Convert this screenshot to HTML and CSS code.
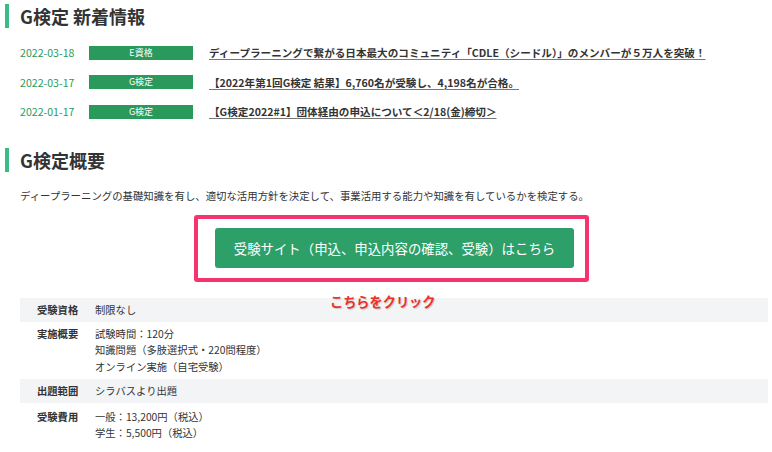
FILE: index.html
```html
<!DOCTYPE html>
<html lang="ja">
<head>
<meta charset="utf-8">
<link rel="stylesheet" href="styles.css">
</head>
<body>
<section class="news">
  <h2 class="heading">G検定 新着情報</h2>
  <ul class="news-list">
    <li class="news-item"><span class="date">2022-03-18</span><span class="badge">E資格</span><a class="link" href="#">ディープラーニングで繋がる日本最大のコミュニティ「CDLE（シードル）」のメンバーが５万人を突破！</a></li>
    <li class="news-item"><span class="date">2022-03-17</span><span class="badge">G検定</span><a class="link" href="#">【2022年第1回G検定 結果】6,760名が受験し、4,198名が合格。</a></li>
    <li class="news-item"><span class="date">2022-01-17</span><span class="badge">G検定</span><a class="link" href="#">【G検定2022#1】団体経由の申込について＜2/18(金)締切＞</a></li>
  </ul>
</section>
<section class="overview">
  <h2 class="heading">G検定概要</h2>
  <p class="desc">ディープラーニングの基礎知識を有し、適切な活用方針を決定して、事業活用する能力や知識を有しているかを検定する。</p>
  <div class="cta-wrap">
    <div class="cta-frame"><a class="cta" href="#">受験サイト（申込、申込内容の確認、受験）はこちら</a></div>
  </div>
  <div class="table">
    <div class="row shaded"><div class="th">受験資格</div><div class="td">制限なし</div></div>
    <div class="row"><div class="th">実施概要</div><div class="td">試験時間：120分<br>知識問題（多肢選択式・220問程度）<br>オンライン実施（自宅受験）</div></div>
    <div class="row shaded"><div class="th">出題範囲</div><div class="td">シラバスより出題</div></div>
    <div class="row"><div class="th">受験費用</div><div class="td">一般：13,200円（税込）<br>学生：5,500円（税込）</div></div>
    <div class="click-note">こちらをクリック</div>
  </div>
</section>
</body>
</html>
```

FILE: styles.css
```css
* { box-sizing: border-box; }
html, body { margin: 0; padding: 0; background: #fff; }
body {
  font-family: "Noto Sans CJK JP", "Noto Sans", sans-serif;
  color: #333;
  width: 772px;
  height: 452px;
  overflow: hidden;
}
.heading {
  margin: 0;
  font-size: 18px;
  font-weight: 700;
  line-height: 24px;
  color: #333;
  border-left: 4px solid #3dba8a;
  padding-left: 11px;
  margin-left: 5px;
}
.news { padding-top: 4px; }
.news-list {
  list-style: none;
  margin: 10px 0 0 0;
  padding: 0 0 0 20px;
}
.news-item {
  display: flex;
  align-items: center;
  height: 29.5px;
  font-size: 10.5px;
}
.date {
  color: #2a9a5c;
  width: 69px;
  font-size: 10.6px;
}
.badge {
  background: #2a9a5c;
  color: #fff;
  width: 104px;
  height: 14px;
  line-height: 14px;
  text-align: center;
  font-size: 9px;
  margin-right: 16px;
}
.link {
  color: #333;
  font-weight: 700;
  font-size: 10.6px;
  text-decoration: underline;
  text-decoration-color: #777;
  text-underline-offset: 2px;
}
.overview { padding-top: 21px; }
.desc {
  margin: 16px 0 0 20px;
  font-size: 10.4px;
  line-height: 16px;
}
.cta-wrap {
  display: flex;
  margin-top: 11px;
  padding-left: 194px;
}
.cta-frame {
  border: 4px solid #f5336e;
  border-radius: 3px;
  width: 395px;
  height: 67px;
  padding: 9px 0 0 17px;
}
.cta {
  display: flex;
  align-items: center;
  justify-content: center;
  width: 359px;
  height: 40px;
  background: #2da06a;
  border-radius: 3px;
  color: #fff;
  font-size: 13.4px;
  text-decoration: none;
}
.table {
  position: relative;
  margin: 16px 4px 0 20px;
  font-size: 10.3px;
}
.row {
  display: flex;
  padding: 4px 0;
  line-height: 16.5px;
}
.row.shaded { background: #f3f4f6; }
.th {
  width: 75px;
  padding-left: 17px;
  font-weight: 700;
}
.td { flex: 1; }
.row:nth-child(1) { height: 24px; }
.row:nth-child(2) { height: 57px; padding-top: 4px; }
.row:nth-child(3) { height: 24px; }
.row:nth-child(4) { padding-top: 6px; }
.click-note {
  position: absolute;
  left: 310px;
  top: -6px;
  color: #e8322a;
  font-weight: 700;
  font-size: 13.2px;
  text-shadow: 1px 1px 1px rgba(0,0,0,0.18);
}
```
